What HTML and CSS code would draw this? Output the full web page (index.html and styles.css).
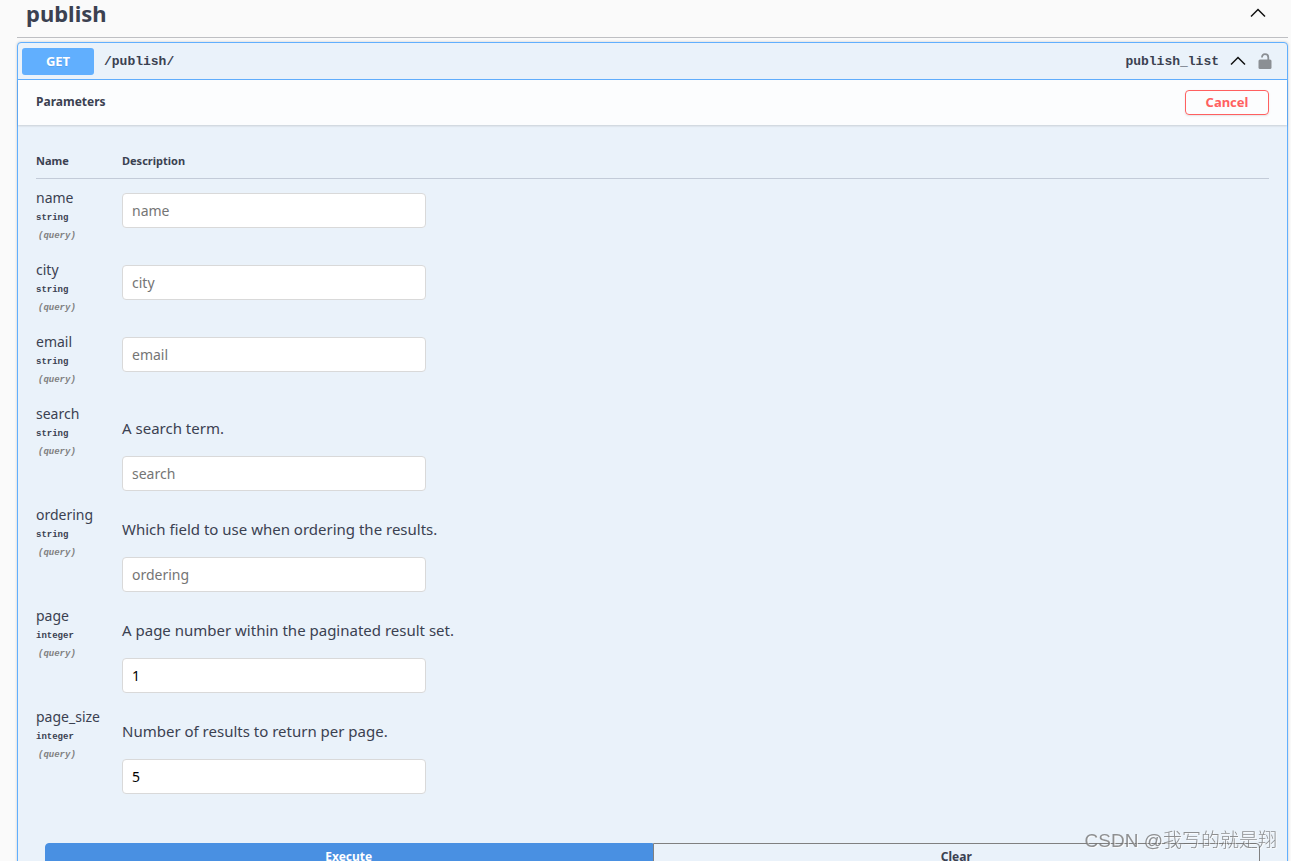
FILE: index.html
```
<!DOCTYPE html>
<html lang="en">
<head>
<meta charset="utf-8">
<title>API documentation</title>
<link rel="stylesheet" href="styles.css">
</head>
<body>
<main class="docs">
  <header class="tag-header">
    <h1 class="tag-title">publish</h1>
    <button class="icon-button" type="button" aria-label="Collapse section">
      <svg class="chevron" viewBox="0 0 16 10"><path d="M1 8.5 8 1.5 15 8.5"/></svg>
    </button>
  </header>
  <section class="operation">
    <div class="summary">
      <span class="method">GET</span>
      <span class="path">/publish/</span>
      <span class="operation-id">publish_list</span>
      <button class="icon-button" type="button" aria-label="Collapse operation">
        <svg class="chevron" viewBox="0 0 16 10"><path d="M1 8.5 8 1.5 15 8.5"/></svg>
      </button>
      <button class="icon-button lock-button" type="button" aria-label="Authorize">
        <svg class="lock" viewBox="0 0 14 17"><path d="M4 4.500C4 2.300 5 1.200 7 1.200S10.300 2.300 10.300 4.500V8" fill="none" stroke="#8b8f94" stroke-width="1.800"/><rect x="0.500" y="6.500" width="13" height="9.500" rx="1.500" fill="#8b8f94"/></svg>
      </button>
    </div>
    <div class="section-header">
      <h2 class="section-title">Parameters</h2>
      <button class="cancel" type="button">Cancel</button>
    </div>
    <div class="parameters">
      <table class="param-table">
        <thead><tr><th class="name-col">Name</th><th>Description</th></tr></thead>
        <tbody>
          <tr><td><label class="param-name" for="p-name">name</label><div class="param-type">string</div><div class="param-in">(query)</div></td><td><input class="field" id="p-name" type="text" placeholder="name"></td></tr>
          <tr><td><label class="param-name" for="p-city">city</label><div class="param-type">string</div><div class="param-in">(query)</div></td><td><input class="field" id="p-city" type="text" placeholder="city"></td></tr>
          <tr><td><label class="param-name" for="p-email">email</label><div class="param-type">string</div><div class="param-in">(query)</div></td><td><input class="field" id="p-email" type="text" placeholder="email"></td></tr>
          <tr><td><label class="param-name" for="p-search">search</label><div class="param-type">string</div><div class="param-in">(query)</div></td><td><p class="hint">A search term.</p><input class="field" id="p-search" type="text" placeholder="search"></td></tr>
          <tr><td><label class="param-name" for="p-ordering">ordering</label><div class="param-type">string</div><div class="param-in">(query)</div></td><td><p class="hint">Which field to use when ordering the results.</p><input class="field" id="p-ordering" type="text" placeholder="ordering"></td></tr>
          <tr><td><label class="param-name" for="p-page">page</label><div class="param-type">integer</div><div class="param-in">(query)</div></td><td><p class="hint">A page number within the paginated result set.</p><input class="field" id="p-page" type="text" value="1"></td></tr>
          <tr><td><label class="param-name" for="p-size">page_size</label><div class="param-type">integer</div><div class="param-in">(query)</div></td><td><p class="hint">Number of results to return per page.</p><input class="field" id="p-size" type="text" value="5"></td></tr>
        </tbody>
      </table>
    </div>
    <div class="actions">
      <button class="action execute" type="button">Execute</button>
      <button class="action clear" type="button">Clear</button>
    </div>
  </section>
</main>
<div class="watermark">CSDN @我写的就是翔</div>
</body>
</html>
```

FILE: styles.css
```
* { box-sizing: border-box; }
body {
  margin: 0;
  height: 100vh;
  overflow: hidden;
  background: #fafafa;
  color: #3b4151;
  font-family: "Noto Sans", "Open Sans", sans-serif;
  font-size: 14px;
  line-height: 20px;
}
button { font-family: inherit; cursor: pointer; }
.docs { padding: 0 3px 0 17px; }
.tag-header {
  display: flex;
  align-items: center;
  justify-content: space-between;
  height: 38px;
  padding: 0 21px 11px 9px;
  border-bottom: 1px solid #bebfc3;
}
.tag-title { margin: 0; font-size: 22px; line-height: 28px; }
.icon-button {
  display: flex;
  padding: 0;
  border: 0;
  background: none;
}
.chevron {
  width: 18px;
  height: 10px;
  fill: none;
  stroke: #111;
  stroke-width: 1.500;
}
.operation {
  margin-top: 4px;
  border: 1px solid #61affe;
  border-radius: 4px;
  background: #eaf2fa;
  box-shadow: 0 0 3px rgba(0, 0, 0, .19);
}
.summary {
  display: flex;
  align-items: center;
  height: 37px;
  padding: 0 15px 0 4px;
  border-bottom: 1px solid #61affe;
}
.method {
  width: 72px;
  border-radius: 3px;
  background: #61affe;
  color: #fff;
  font-size: 13px;
  font-weight: 700;
  line-height: 27px;
  text-align: center;
  text-shadow: 0 1px 0 rgba(0, 0, 0, .1);
}
.path, .operation-id {
  padding-top: 2px;
  font-family: "Liberation Mono", monospace;
  font-size: 13px;
  font-weight: 700;
}
.path { flex: 1; padding-left: 10px; }
.operation-id { padding-right: 10px; }
.lock-button { margin-left: 11px; }
.lock { width: 14px; height: 17px; }
.section-header {
  display: flex;
  align-items: center;
  justify-content: space-between;
  height: 45px;
  padding: 0 18px;
  background: #fcfdfe;
  box-shadow: 0 1px 2px rgba(0, 0, 0, .15);
}
.section-title { margin: 0; padding-bottom: 2px; font-size: 12px; }
.cancel {
  width: 84px;
  height: 25px;
  padding: 0 0 2px;
  border: 1px solid #ff6060;
  border-radius: 4px;
  background: transparent;
  color: #ff6060;
  font-size: 13px;
  font-weight: 700;
  box-shadow: 0 1px 2px rgba(0, 0, 0, .1);
}
.parameters { padding: 26px 18px 0; }
.param-table { width: 100%; border-collapse: separate; border-spacing: 0; }
.param-table th {
  height: 28px;
  padding: 0 0 8px;
  border-bottom: 1px solid #c3cbd8;
  font-size: 11px;
  line-height: 19px;
  text-align: left;
}
.param-table .name-col { width: 86px; }
.param-table td { padding: 9px 0 0; vertical-align: top; }
.param-table td:first-child { padding-bottom: 6px; }
.param-name { display: block; margin-bottom: 1px; }
.param-type, .param-in {
  font-family: "Liberation Mono", monospace;
  font-size: 9px;
  font-weight: 700;
  line-height: 18px;
}
.param-in { padding-left: 2px; color: #808080; font-style: italic; }
.hint { margin: 14px 0 18px; font-size: 15px; }
.field {
  display: block;
  width: 304px;
  max-width: 100%;
  height: 35px;
  margin: 5px 0;
  padding: 0 9px;
  border: 1px solid #d9d9d9;
  border-radius: 4px;
  background: #fff;
  color: #000;
  font: inherit;
}
.field::placeholder { color: #757575; opacity: 1; }
.actions { display: flex; padding: 44px 27px 40px; }
.action {
  flex: 1;
  height: 27px;
  padding: 0;
  border: 1px solid #808080;
  color: #3b4151;
  font-size: 12px;
  font-weight: 700;
}
.execute {
  border-color: #4990e2;
  border-radius: 4px 0 0 4px;
  background: #4990e2;
  color: #fff;
}
.clear { border-radius: 0 4px 4px 0; background: transparent; }
.watermark {
  position: fixed;
  right: 14px;
  bottom: 6px;
  color: rgba(110, 110, 110, .75);
  font-family: "Liberation Sans", "Noto Sans CJK SC", sans-serif;
  font-size: 19px;
  font-weight: 300;
  line-height: 28px;
  text-shadow: 1px 1px 0 rgba(255, 255, 255, .7);
  pointer-events: none;
}
```
